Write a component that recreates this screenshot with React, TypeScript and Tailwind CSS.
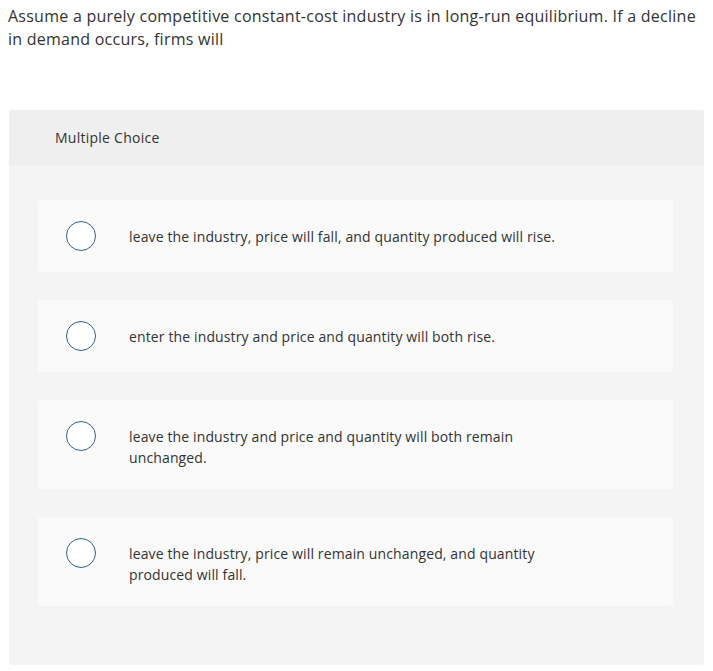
import React from 'react';

const choices = [
  'leave the industry, price will fall, and quantity produced will rise.',
  'enter the industry and price and quantity will both rise.',
  'leave the industry and price and quantity will both remain unchanged.',
  'leave the industry, price will remain unchanged, and quantity produced will fall.',
];

export default function App() {
  return (
    <div
      className="w-[713px] h-[671px] bg-white text-[#333]"
      style={{ fontFamily: '"Open Sans", "Liberation Sans", sans-serif' }}
    >
      <p className="pl-[8px] pr-[10px] pt-[5px] text-[16px] leading-[23px] tracking-[0.25px]">
        Assume a purely competitive constant-cost industry is in long-run equilibrium. If a decline in demand occurs, firms will
      </p>

      <div className="ml-[9px] mr-[9px] mt-[59px] rounded-[3px] bg-[#f4f4f4] overflow-hidden">
        <div className="h-[55px] bg-[#efefef] flex items-center pl-[46px] text-[14px] tracking-[0.25px]">
          Multiple Choice
        </div>
        <div className="pt-[35px] pb-[59px] pl-[29px] pr-[31px] flex flex-col gap-[28px]">
          {choices.map((c) => (
            <div key={c} className="bg-[#fafafa] rounded-[3px] flex items-start py-[21px] pl-[28px] pr-[100px]">
              <span className="w-[30px] h-[30px] rounded-full border-[1.5px] border-[#2f5f8e] bg-white shrink-0" />
              <span className="ml-[33px] mt-[5px] text-[14px] leading-[21px] tracking-[0.13px]">{c}</span>
            </div>
          ))}
        </div>
      </div>
    </div>
  );
}
